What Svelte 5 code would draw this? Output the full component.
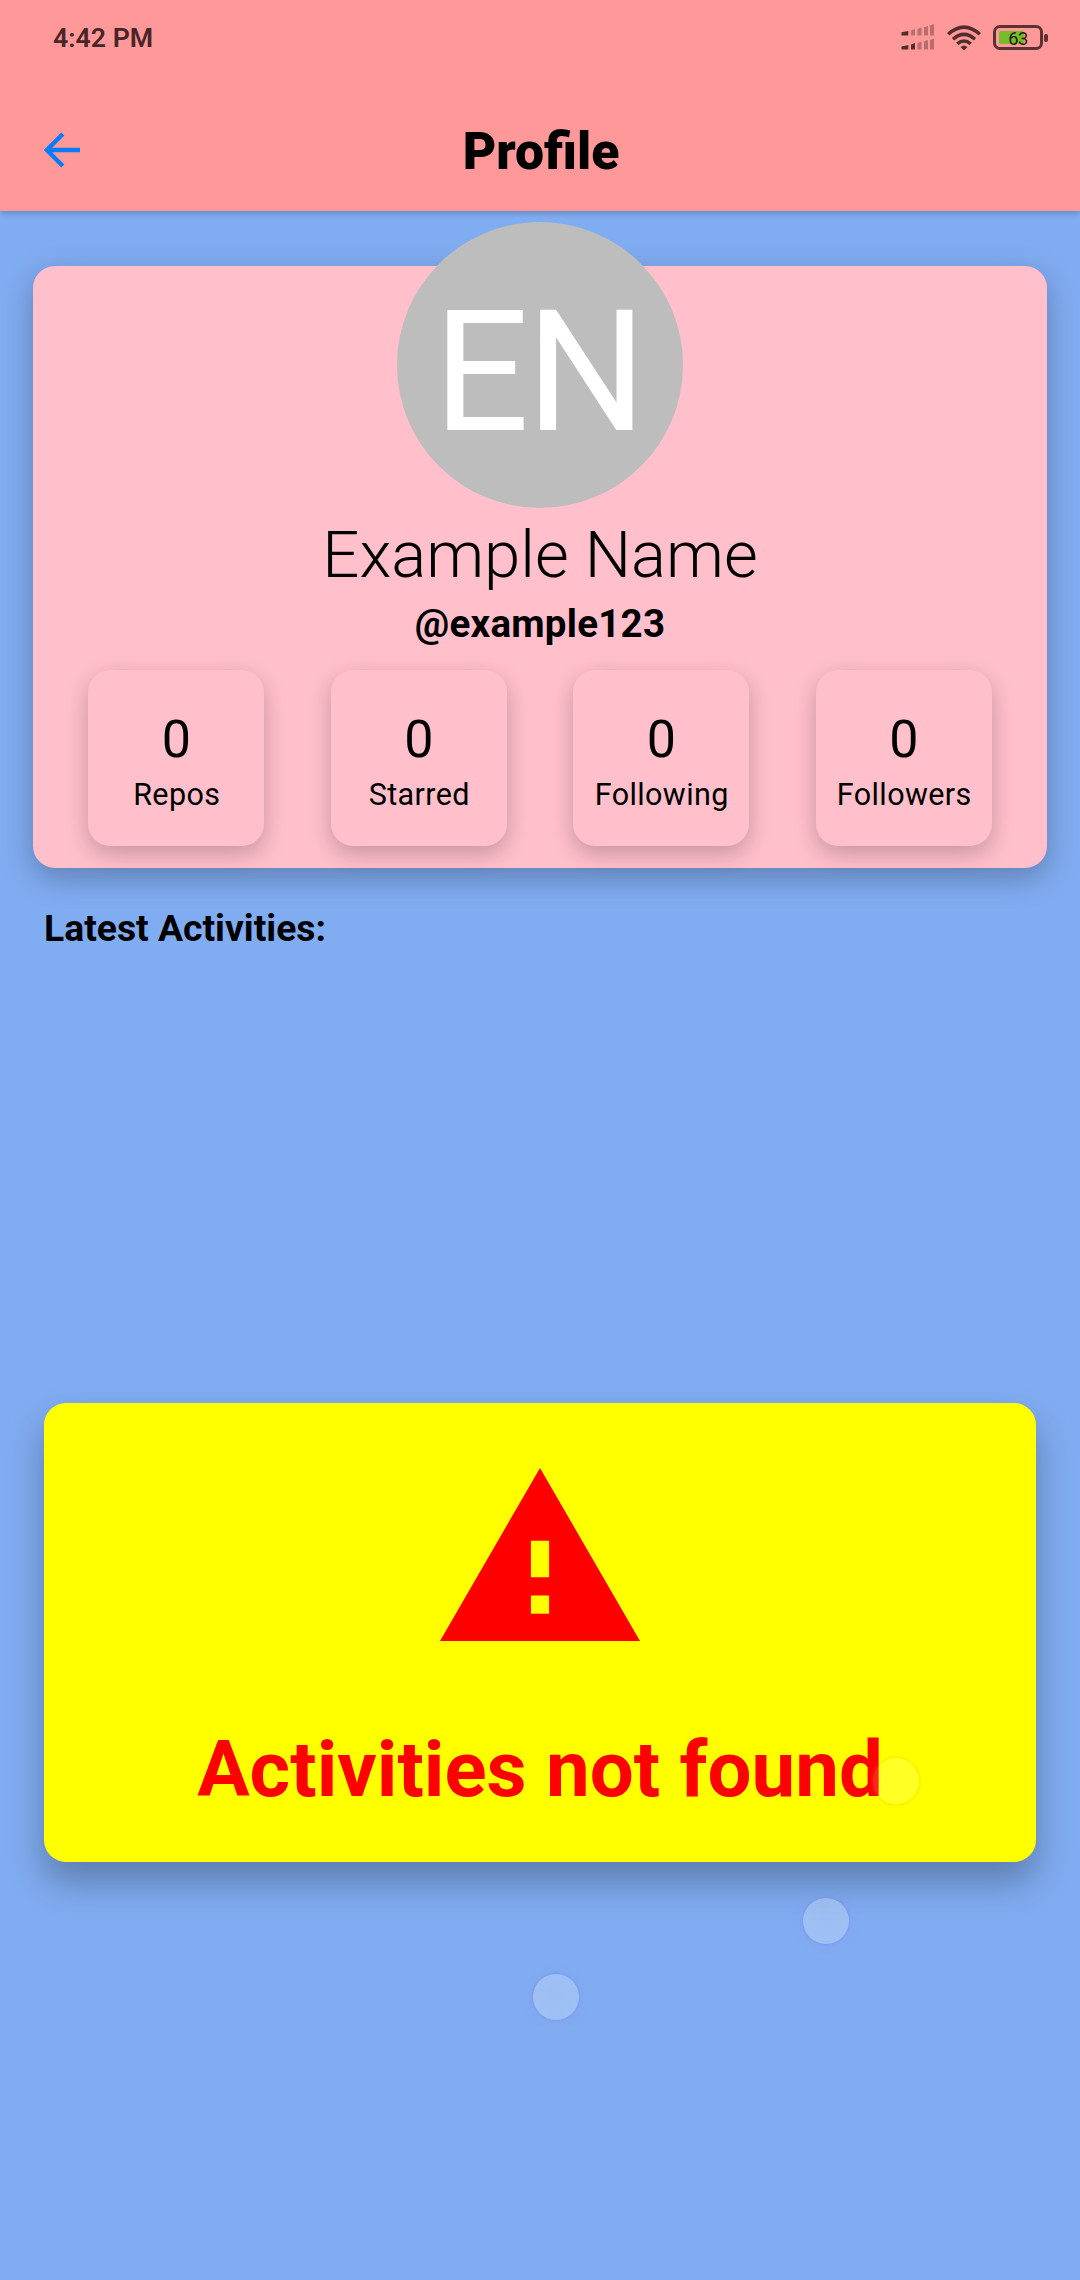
<script>
  const stats = [
    { value: 0, label: 'Repos' },
    { value: 0, label: 'Starred' },
    { value: 0, label: 'Following' },
    { value: 0, label: 'Followers' }
  ];
</script>

<div class="screen">
  <header>
    <div class="status">
      <span class="time">4:42 PM</span>
      <div class="indicators">
        <svg class="signal" width="34" height="28" viewBox="0 0 34 28" fill="#532c2e">
          <path d="M.5 8.200L7.300 7V11.500H.5z" />
          <g opacity=".4">
            <path d="M10 6.500L14 5V11.500H10zM16.500 5L20.500 3.500V11.500H16.500zM23 3.500L27 2V11.500H23zM29 1.500L33 0V11.500H29z" />
            <path d="M16.500 19L20.500 17.500V25.500H16.500zM23 17.500L27 16V25.500H23zM29 16L33 14.500V25.500H29z" />
          </g>
          <path d="M.5 22.500L7.300 21V25.500H.5zM10 20.500L14 19V25.500H10z" />
        </svg>
        <svg class="wifi" width="34" height="26" viewBox="0 0 34 26" fill="none" stroke="#532c2e" stroke-width="3.500">
          <path d="M1.200 9.200Q17-5 32.800 9.200" />
          <path d="M6 14.300Q17 4.500 28 14.300" />
          <path d="M10.300 18.900Q17 13 23.700 18.900" />
          <path d="M13.500 22Q17 19 20.500 22L17 25.500z" fill="#532c2e" stroke="none" />
        </svg>
        <div class="battery">
          <div class="shell"><span class="charge"></span><span class="percent">63</span></div>
          <span class="cap"></span>
        </div>
      </div>
    </div>
    <nav>
      <svg class="back" width="36" height="36" viewBox="0 0 36 36" fill="none" stroke="#087cff" stroke-width="4.500">
        <path d="M36 18H4M18.800 2L2.900 18L18.800 34" />
      </svg>
      <h1>Profile</h1>
    </nav>
  </header>

  <main>
    <section class="card">
      <div class="avatar"><span>EN</span></div>
      <h2>Example Name</h2>
      <p class="handle">@example123</p>
      <div class="stats">
        {#each stats as stat}
          <div class="stat">
            <span class="value">{stat.value}</span>
            <span class="label">{stat.label}</span>
          </div>
        {/each}
      </div>
    </section>

    <h3>Latest Activities:</h3>

    <section class="notice">
      <svg width="200" height="173" viewBox="1 2 22 19" preserveAspectRatio="none" fill="#f00">
        <path d="M1 21h22L12 2 1 21zm12-3h-2v-2h2v2zm0-4h-2v-4h2v4z" />
      </svg>
      <p>Activities not found</p>
    </section>
  </main>

  <span class="bubble first"></span>
  <span class="bubble second"></span>
  <span class="bubble third"></span>
</div>

<style>
  :global(body) {
    margin: 0;
  }
  .screen {
    position: relative;
    display: flex;
    flex-direction: column;
    width: 1080px;
    height: 2280px;
    overflow: hidden;
    background: #80acf1;
    color: #000;
    font-family: Roboto, sans-serif;
  }
  h1, h2, h3, p {
    margin: 0;
  }
  header {
    display: flex;
    flex-direction: column;
    justify-content: space-between;
    box-sizing: border-box;
    height: 211px;
    flex: none;
    background: #ff9999;
    box-shadow: 0 2px 6px rgba(0, 0, 0, 0.22);
  }
  .status {
    display: flex;
    justify-content: space-between;
    align-items: center;
    height: 75px;
    padding: 0 32px 0 53px;
  }
  .time {
    font-size: 26.7px;
    font-weight: 600;
    color: #4a2527;
  }
  .indicators {
    display: flex;
    align-items: center;
  }
  .signal {
    margin-right: 12px;
  }
  .wifi {
    margin-right: 12px;
  }
  .battery {
    display: flex;
    align-items: center;
    gap: 1px;
  }
  .shell {
    position: relative;
    display: flex;
    align-items: center;
    justify-content: center;
    box-sizing: border-box;
    width: 50px;
    height: 25px;
    border: 3px solid #5b3133;
    border-radius: 7px;
  }
  .charge {
    position: absolute;
    left: 3px;
    top: 3px;
    width: 25px;
    height: 13px;
    border-radius: 2px;
    background: #75bd28;
  }
  .percent {
    position: relative;
    padding-top: 2px;
    font-size: 18.300px;
    letter-spacing: -0.6px;
    line-height: 20px;
    color: #2b1a0c;
  }
  .cap {
    width: 4px;
    height: 8px;
    border-radius: 2px;
    background: #5b3133;
  }
  nav {
    position: relative;
    display: flex;
    align-items: center;
    justify-content: center;
    height: 121px;
  }
  .back {
    position: absolute;
    left: 44px;
    top: 41.500px;
  }
  h1 {
    padding: 2px 0 0 2px;
    font-size: 51.700px;
    font-weight: 900;
    line-height: 60px;
  }
  main {
    display: flex;
    flex-direction: column;
    padding: 55px 33px 0;
  }
  .card {
    display: flex;
    flex-direction: column;
    align-items: center;
    box-sizing: border-box;
    height: 602px;
    padding: 0 22px 22px;
    border-radius: 22px;
    background: #ffbfcb;
    box-shadow: 0 10px 30px rgba(0, 0, 0, 0.26);
  }
  .avatar {
    display: flex;
    align-items: center;
    justify-content: center;
    box-sizing: border-box;
    width: 286px;
    height: 286px;
    margin-top: -44px;
    padding: 16px 3px 0 0;
    flex: none;
    border-radius: 50%;
    background: #bdbdbd;
    color: #fff;
    font-size: 168.500px;
    line-height: 200px;
    letter-spacing: -3px;
  }
  h2 {
    padding-top: 1px;
    font-size: 65.300px;
    font-weight: 300;
    line-height: 92px;
  }
  .handle {
    font-size: 38.5px;
    font-weight: 700;
    letter-spacing: 0.25px;
    line-height: 46px;
  }
  .stats {
    display: flex;
    justify-content: space-around;
    width: 100%;
    margin-top: 23px;
  }
  .stat {
    display: flex;
    flex-direction: column;
    align-items: center;
    box-sizing: border-box;
    width: 176px;
    height: 176px;
    padding-top: 39px;
    border-radius: 22px;
    background: #ffbfcb;
    box-shadow: 0 8px 22px rgba(0, 0, 0, 0.22);
  }
  .value {
    font-size: 52px;
    line-height: 62px;
  }
  .label {
    margin: 6px 0 0 1px;
    font-size: 30.500px;
    letter-spacing: 0.4px;
    line-height: 36px;
  }
  h3 {
    margin: 38px 0 0 11px;
    font-size: 37.300px;
    font-weight: 700;
    line-height: 44px;
  }
  .notice {
    display: flex;
    flex-direction: column;
    align-items: center;
    box-sizing: border-box;
    height: 459px;
    margin: 453px 11px 0;
    padding-top: 65px;
    border-radius: 22px;
    background: #ff0;
    box-shadow: 0 20px 36px rgba(0, 0, 0, 0.28);
  }
  .notice p {
    margin-top: 84px;
    color: #f00;
    font-size: 78px;
    font-weight: 700;
    line-height: 90px;
  }
  /* Translucent bubbles floating above the page */
  .bubble {
    position: absolute;
    width: 46px;
    height: 46px;
    border-radius: 50%;
    background: radial-gradient(circle, rgba(255, 255, 255, 0.21), rgba(255, 255, 255, 0.26));
    box-shadow: 0 0 2px 1px rgba(70, 80, 190, 0.12), 0 0 6px 5px rgba(150, 150, 255, 0.14);
  }
  .first {
    left: 873px;
    top: 1758px;
    background: rgba(255, 255, 255, 0.14);
    box-shadow: 0 0 2px 2px rgba(190, 170, 0, 0.14);
  }
  .second {
    left: 803px;
    top: 1898px;
  }
  .third {
    left: 533px;
    top: 1974px;
  }
</style>
